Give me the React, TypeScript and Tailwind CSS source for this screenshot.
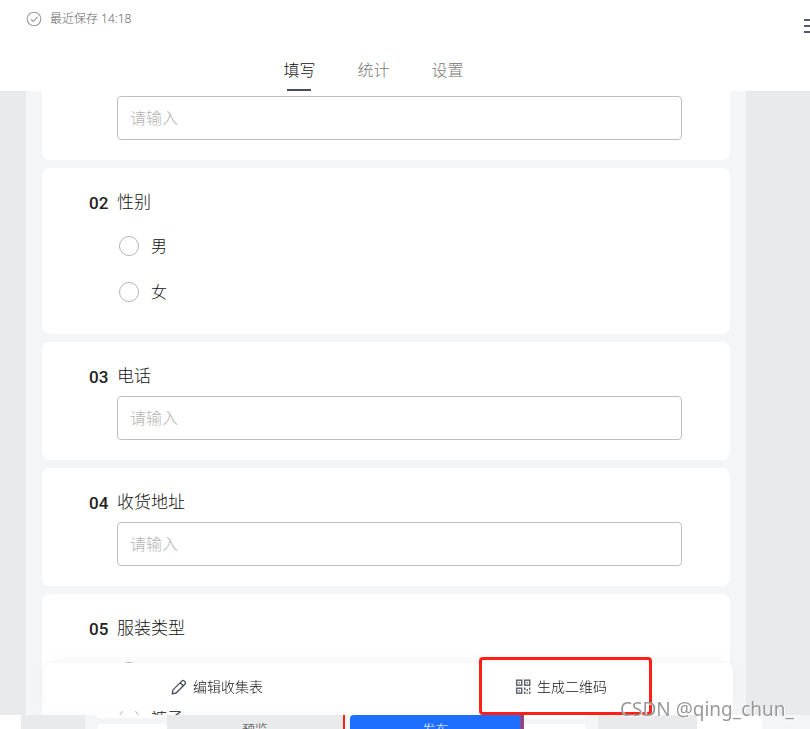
import React, { useState } from 'react';

const TABS = ['填写', '统计', '设置'];

interface QuestionProps {
  no: string;
  title: string;
  children: React.ReactNode;
}

function Question({ no, title, children }: QuestionProps) {
  return (
    <section className="flex rounded-lg bg-white py-5 pr-12 pl-[47px]">
      <span className="w-7 shrink-0 pt-px font-['Roboto',sans-serif] text-[17px] leading-7 font-medium text-[#222]">
        {no}
      </span>
      <div className="min-w-0 flex-1">
        <h2 className="text-[17px] leading-7 text-[#111]">{title}</h2>
        <div className="mt-1.5">{children}</div>
      </div>
    </section>
  );
}

function TextField({ label }: { label: string }) {
  return (
    <input
      type="text"
      aria-label={label}
      placeholder="请输入"
      className="block h-11 w-full rounded border border-[#bfbfbf] bg-white px-3 text-base text-[#222] placeholder:text-[#b4b4b4]"
    />
  );
}

function Options({ name, options }: { name: string; options: string[] }) {
  return (
    <div className="flex flex-col gap-[26px] pt-3.5 pb-3 pl-0.5">
      {options.map((option) => (
        <label key={option} className="flex h-5 items-center gap-3 text-base leading-5 text-[#111]">
          <input
            type="radio"
            name={name}
            className="size-5 appearance-none rounded-full border border-[#b4b5b9] bg-white checked:border-[6px] checked:border-[#1e6fff]"
          />
          {option}
        </label>
      ))}
    </div>
  );
}

function CheckIcon() {
  return (
    <svg width="16" height="16" viewBox="0 0 16 16" fill="none" stroke="#999" strokeWidth="1.1">
      <circle cx="8" cy="8" r="6.8" />
      <path d="M4.8 8.1l2.4 2.3 4.3-4.5" />
    </svg>
  );
}

function PencilIcon() {
  return (
    <svg width="16" height="16" viewBox="0 0 16 16" fill="none" stroke="#464d5e" strokeWidth="1.3" strokeLinejoin="round">
      <path d="M1.2 14.8l.8-3.9L11 1.9c.6-.6 1.4-.6 2 0l1.1 1.1c.6.6.6 1.4 0 2L5.1 14z" />
      <path d="M9.2 3.7l3.1 3.1" />
    </svg>
  );
}

function QrIcon() {
  return (
    <svg width="16" height="16" viewBox="0 0 16 16" fill="none" stroke="#5f6573" strokeWidth="1.5">
      <rect x="1.7" y="1.2" width="5" height="5" />
      <rect x="9.7" y="1.2" width="5" height="5" />
      <rect x="1.7" y="9.2" width="5" height="5" />
      <path d="M3.6 3.7h1.2M11.6 3.7h1.2M3.6 11.7h1.2M9.7 8.5v2.5M9.7 12.5v2.5M12.2 10v2M14.7 8.5v2.2M14.7 12.5v2.5M11.5 14.2h1.2" />
    </svg>
  );
}

export default function App() {
  const [tab, setTab] = useState('填写');

  return (
    <div className="relative flex h-screen flex-col overflow-hidden bg-white font-['Noto_Sans','Noto_Sans_CJK_SC',sans-serif] font-light">
      <header className="flex shrink-0 flex-col">
        <div className="flex h-[52px] items-start justify-between pl-[26px]">
          <div className="flex items-center gap-2 pt-2.5 text-xs leading-[18px] text-[#666]">
            <CheckIcon />
            <span>最近保存 14:18</span>
          </div>
          <button type="button" aria-label="菜单" className="mt-[19px] flex w-1.5 flex-col gap-1">
            <span className="h-0.5 bg-[#565c6b]" />
            <span className="h-0.5 bg-[#565c6b]" />
            <span className="h-0.5 bg-[#565c6b]" />
          </button>
        </div>
        <nav className="flex justify-center gap-[42px] pr-[63px]">
          {TABS.map((name) => (
            <button
              key={name}
              type="button"
              onClick={() => setTab(name)}
              className={`flex h-[39px] flex-col items-center justify-between text-base leading-9 ${
                tab === name ? 'text-[#111]' : 'text-[#777]'
              }`}
            >
              {name}
              {tab === name && <span className="h-0.5 w-6 bg-[#464d5e]" />}
            </button>
          ))}
        </nav>
      </header>

      <main className="relative min-h-0 flex-1 overflow-hidden bg-[#e9eaec] pr-16 pl-[26px]">
        <div className="flex min-h-full flex-col gap-2 bg-[#f3f5f7] px-4">
          <section className="rounded-b-lg bg-white pt-[5px] pr-12 pb-5 pl-[75px]">
            <TextField label="姓名" />
          </section>
          <Question no="02" title="性别">
            <Options name="gender" options={['男', '女']} />
          </Question>
          <Question no="03" title="电话">
            <TextField label="电话" />
          </Question>
          <Question no="04" title="收货地址">
            <TextField label="收货地址" />
          </Question>
          <Question no="05" title="服装类型">
            <Options name="clothes" options={['上衣', '裤子']} />
          </Question>
        </div>

        <div className="absolute right-[77px] bottom-1 left-[45px] flex h-12 rounded-t-lg bg-white/98 text-sm text-[#111] shadow-[0_-3px_12px_rgba(0,0,0,0.04)] backdrop-blur-sm">
          <button type="button" className="flex flex-1 items-center justify-center gap-1.5">
            <PencilIcon />
            编辑收集表
          </button>
          <button type="button" className="flex flex-1 items-center justify-center gap-1.5">
            <QrIcon />
            生成二维码
          </button>
        </div>
        <div className="absolute right-[158px] bottom-0 h-[58px] w-[173px] rounded border-3 border-[#ff2015]" />
      </main>

      <footer className="flex h-3.5 shrink-0 overflow-hidden bg-[#e9eaec] text-[13px] leading-7 text-[#333]">
        <div className="w-[21px] bg-white" />
        <div className="w-16" />
        <div className="flex w-[82px] flex-col gap-1.5 bg-[#f3f5f7] pl-3">
          <div className="h-[3px] shrink-0 rounded-b bg-white" />
          <div className="h-4 shrink-0 rounded-t bg-white" />
        </div>
        <button type="button" className="h-7 flex-[176]">预览</button>
        <div className="w-[7px] border-l-2 border-[#ff2015] bg-[#f3f5f7]" />
        <button type="button" className="h-7 flex-[171] rounded-tl-sm bg-[#1e6fff] text-white">
          发布
        </button>
        <div className="w-[3px] border-r border-[#1e6fff] bg-[#ff2015]" />
        <div className="flex w-[74px] flex-col gap-1.5 bg-[#f3f5f7] pr-3">
          <div className="h-[3px] shrink-0 rounded-b bg-white" />
          <div className="h-4 shrink-0 rounded-t bg-white" />
        </div>
        <div className="w-[99px]" />
        <div className="w-[65px] bg-white" />
        <div className="w-12 bg-[#f3f5f7]" />
      </footer>

      <span className="absolute right-4 bottom-2 text-[19px] leading-6 font-normal text-[#999] [text-shadow:1px_1px_1px_#fff]">
        CSDN @qing_chun_
      </span>
    </div>
  );
}
